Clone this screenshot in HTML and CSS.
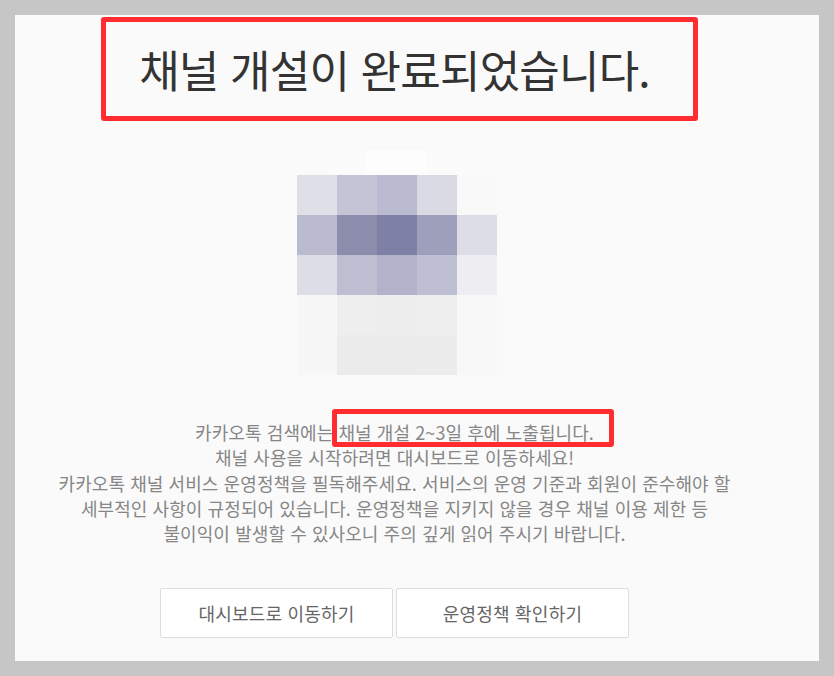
FILE: index.html
```html
<!DOCTYPE html>
<html lang="ko">
<head>
<meta charset="utf-8">
<title>채널 개설 완료</title>
<link rel="stylesheet" href="styles.css">
</head>
<body>
<main class="panel">
  <h1 class="title">채널 개설이 완료되었습니다.</h1>
  <div class="mosaic-wrap">
    <div class="mosaic-top"></div>
    <div class="mosaic">
      <i class="c11"></i><i class="c12"></i><i class="c13"></i><i class="c14"></i><i class="c15"></i>
      <i class="c21"></i><i class="c22"></i><i class="c23"></i><i class="c24"></i><i class="c25"></i>
      <i class="c31"></i><i class="c32"></i><i class="c33"></i><i class="c34"></i><i class="c35"></i>
      <i class="c41"></i><i class="c42"></i><i class="c43"></i><i class="c44"></i><i class="c45"></i>
      <i class="c51"></i><i class="c52"></i><i class="c53"></i><i class="c54"></i><i class="c55"></i>
    </div>
  </div>
  <p class="desc">카카오톡 검색에는 채널 개설 2~3일 후에 노출됩니다.<br>
  채널 사용을 시작하려면 대시보드로 이동하세요!<br>
  카카오톡 채널 서비스 운영정책을 필독해주세요. 서비스의 운영 기준과 회원이 준수해야 할<br>
  세부적인 사항이 규정되어 있습니다. 운영정책을 지키지 않을 경우 채널 이용 제한 등<br>
  불이익이 발생할 수 있사오니 주의 깊게 읽어 주시기 바랍니다.</p>
  <div class="actions">
    <button class="btn" type="button">대시보드로 이동하기</button>
    <button class="btn" type="button">운영정책 확인하기</button>
  </div>
  <div class="mark mark-title"></div>
  <div class="mark mark-desc"></div>
</main>
</body>
</html>
```
FILE: styles.css
```css
* { box-sizing: border-box; }
html, body { margin: 0; height: 100%; }
body {
  background: #c6c6c6;
  padding: 15px;
  font-family: "Noto Sans CJK KR", "Noto Sans", sans-serif;
}
.panel {
  position: relative;
  height: 646px;
  padding-right: 45px;
  background: #fafafa;
  display: flex;
  flex-direction: column;
  align-items: center;
  overflow: hidden;
}
.title {
  margin: 19px 0 0;
  height: 70px;
  line-height: 70px;
  font-size: 44px;
  font-weight: 400;
  color: #333;
  letter-spacing: -0.8px;
  white-space: nowrap;
}
.mosaic-wrap { margin-top: 48px; margin-left: 4px; width: 200px; }
.mosaic-top {
  height: 25px;
  margin-top: -2px;
  margin-left: 30px;
  width: 138px;
  background: linear-gradient(90deg, #fbfbfb 0 28%, #fdfdfd 28% 72%, #fbfbfb 72%);
}
.mosaic { display: grid; grid-template-columns: repeat(5, 40px); grid-auto-rows: 40px; }
.mosaic i { display: block; }
.c11 { background: #dfdfe8; } .c12 { background: #c4c4d6; } .c13 { background: #babbd0; } .c14 { background: #dadae4; } .c15 { background: #f9f9fa; }
.c21 { background: #babbce; } .c22 { background: #8c8cac; } .c23 { background: #7e80a5; } .c24 { background: #9e9fba; } .c25 { background: #dddde7; }
.c31 { background: #dddde7; } .c32 { background: #bdbed1; } .c33 { background: #b2b3ca; } .c34 { background: #bebfd2; } .c35 { background: #ededf2; }
.c41 { background: #f7f7f7; } .c42 { background: #eeeeee; } .c43 { background: #ededed; } .c44 { background: #eeeeee; } .c45 { background: #f8f8f8; }
.c51 { background: #f7f7f7; } .c52 { background: #ebebeb; } .c53 { background: #ebebeb; } .c54 { background: #ececec; } .c55 { background: #f8f8f8; }
.desc {
  margin: 45px 0 0;
  font-size: 18px;
  line-height: 25.3px;
  letter-spacing: 0.08px;
  color: #868686;
  text-align: center;
  white-space: nowrap;
}
.actions { margin-top: 42px; display: flex; gap: 3px; }
.btn {
  width: 233px;
  height: 50px;
  padding: 0;
  background: #fff;
  border: 1.5px solid #dedede;
  border-radius: 2px;
  font: 400 18px "Noto Sans CJK KR", "Noto Sans", sans-serif;
  letter-spacing: 0.2px;
  color: #666;
}
.mark {
  position: absolute;
  border: 5px solid #ff2d2f;
  border-radius: 3px;
}
.mark-title { left: 86px; top: 2px; width: 597px; height: 104px; }
.mark-desc { left: 317px; top: 394px; width: 282px; height: 38px; }
```
